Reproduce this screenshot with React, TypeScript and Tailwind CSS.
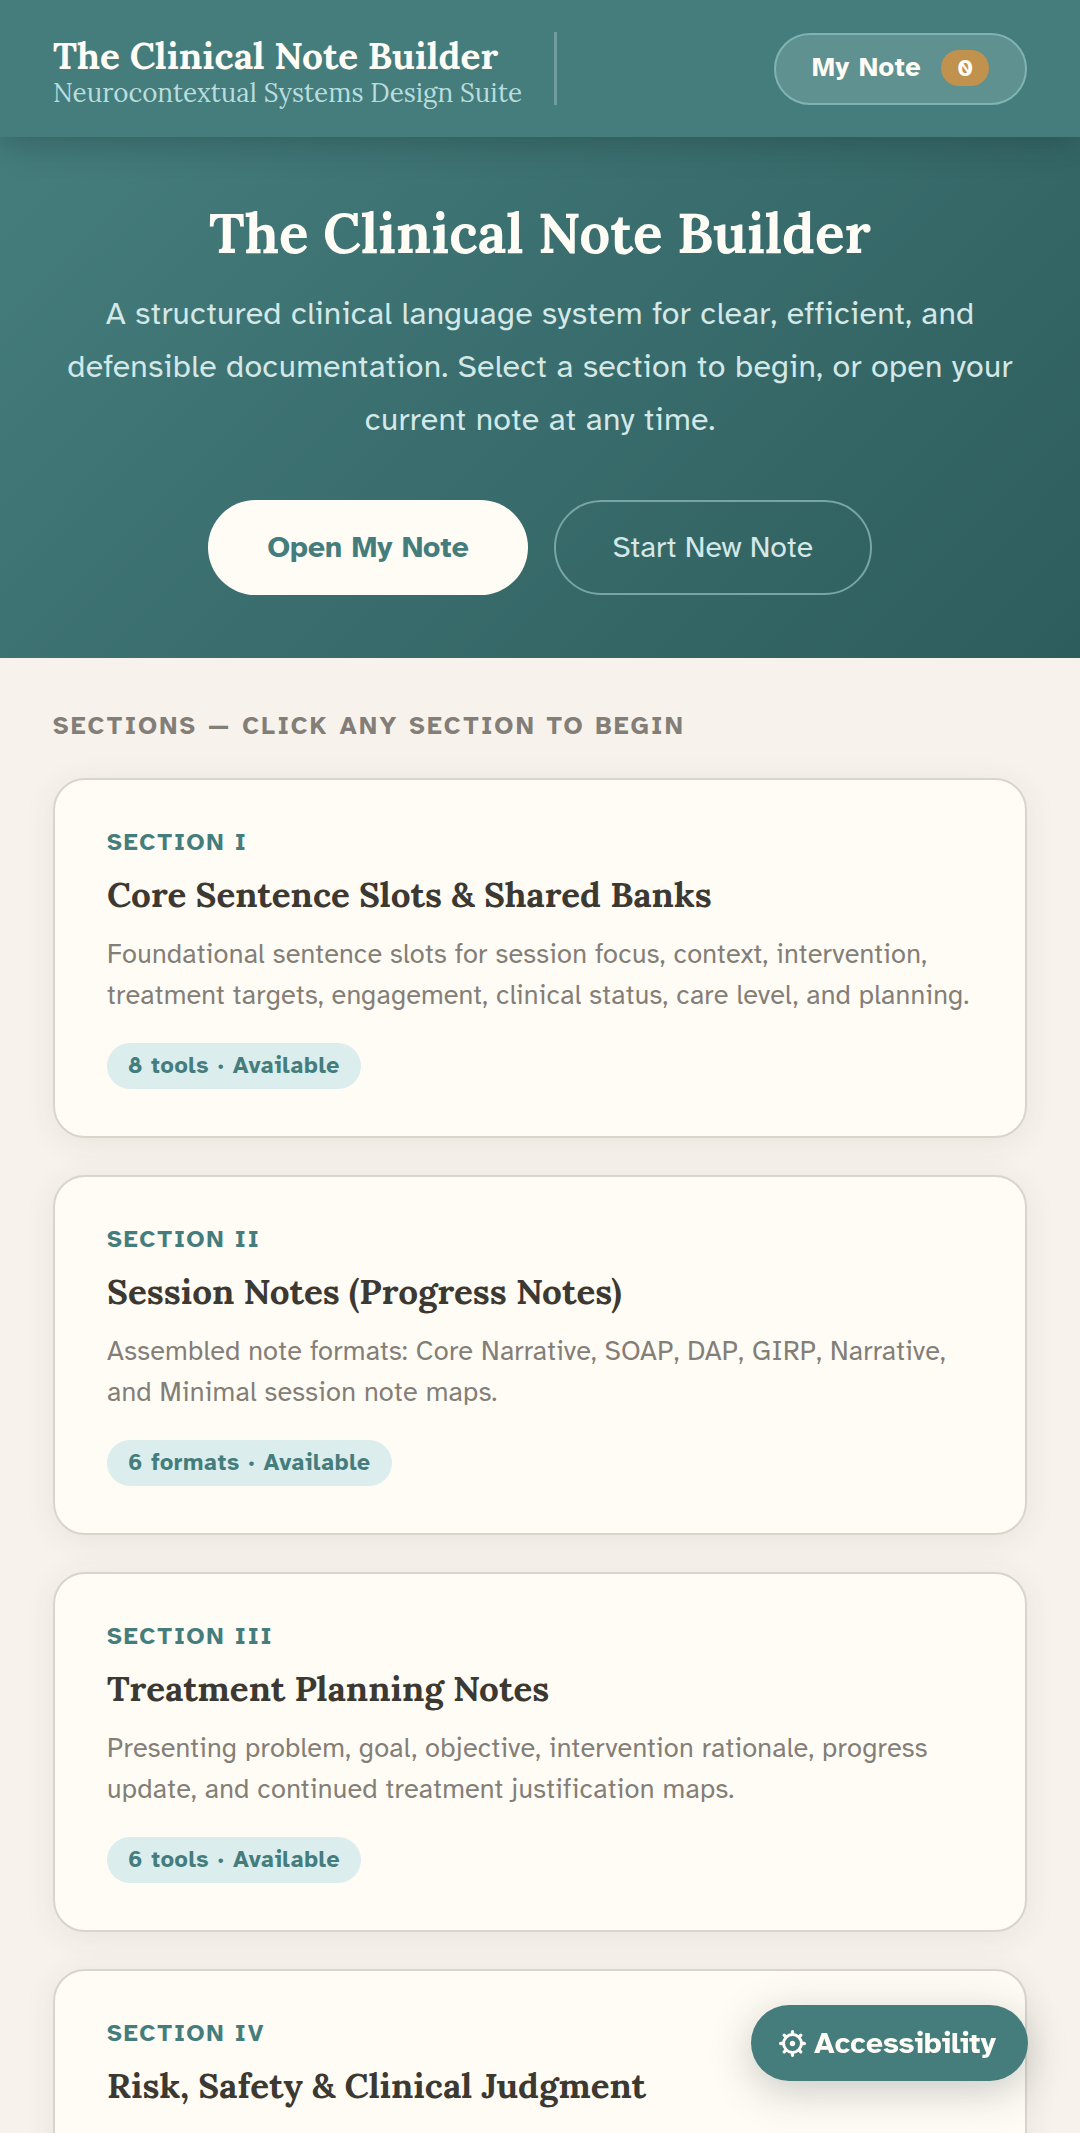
const SERIF = "font-['Lora','Liberation_Serif',serif]";

type Section = {
  id: string;
  label: string;
  title: string;
  description?: string;
  status?: string;
};

const sections: Section[] = [
  {
    id: 'core',
    label: 'SECTION I',
    title: 'Core Sentence Slots & Shared Banks',
    description:
      'Foundational sentence slots for session focus, context, intervention, treatment targets, engagement, clinical status, care level, and planning.',
    status: '8 tools · Available',
  },
  {
    id: 'session',
    label: 'SECTION II',
    title: 'Session Notes (Progress Notes)',
    description:
      'Assembled note formats: Core Narrative, SOAP, DAP, GIRP, Narrative, and Minimal session note maps.',
    status: '6 formats · Available',
  },
  {
    id: 'treatment',
    label: 'SECTION III',
    title: 'Treatment Planning Notes',
    description:
      'Presenting problem, goal, objective, intervention rationale, progress update, and continued treatment justification maps.',
    status: '6 tools · Available',
  },
  {
    id: 'risk',
    label: 'SECTION IV',
    title: 'Risk, Safety & Clinical Judgment',
  },
];

function GearIcon() {
  return (
    <svg viewBox="0 0 26 26" className="size-[27px]" fill="none" stroke="currentColor" aria-hidden="true">
      <circle cx="13" cy="13" r="8.6" strokeWidth="2.8" />
      <circle cx="13" cy="13" r="2.6" fill="currentColor" stroke="none" />
      <g strokeWidth="3.2" strokeLinecap="round">
        <path d="M13 1.6v2.4M13 22v2.4M1.6 13H4M22 13h2.4" />
        <path d="M5 5l1.6 1.6M19.4 19.4L21 21M5 21l1.6-1.6M19.4 6.6L21 5" />
      </g>
    </svg>
  );
}

function Header() {
  return (
    <header className="relative z-10 flex items-center justify-between bg-[#457d7d] px-[53px] py-8 shadow-[0_5px_32px_rgba(20,40,40,0.32)]">
      <div className={`${SERIF} border-r-[3px] border-[#6f9d9d] pr-8`}>
        <div className="pt-1 text-[37px] leading-10 font-bold text-[#fffcf5]">The Clinical Note Builder</div>
        <div className="-mb-1 text-[26px] leading-[33px] text-[#b9dddd]">Neurocontextual Systems Design Suite</div>
      </div>
      <button
        type="button"
        className="flex h-[72px] items-center gap-5 rounded-full border-2 border-[#7fb3b4] bg-[#5f9190] px-9 pb-[2px] text-[27px] font-bold tracking-[0.02em] text-[#fffcf5]"
      >
        My Note
        <span className="flex h-9 w-12 items-center justify-center rounded-full bg-[#c0924e] text-2xl tracking-normal">
          0
        </span>
      </button>
    </header>
  );
}

function Hero() {
  return (
    <section className="bg-linear-135 from-[#457d7d] to-[#2e5d5d] px-[53px] pt-[60px] pb-[63px] text-center">
      <h1 className={`${SERIF} text-[55px] leading-[72px] font-bold text-[#fffcf5]`}>The Clinical Note Builder</h1>
      <p className="mx-auto mt-[18px] max-w-[974px] text-[32px] leading-[53px] tracking-[0.01em] text-[#d3e8e7]">
        A structured clinical language system for clear, efficient, and defensible documentation. Select a section to
        begin, or open your current note at any time.
      </p>
      <div className="mt-[54px] flex justify-center gap-[26px]">
        <button
          type="button"
          className="h-[95px] rounded-full bg-[#fffcf5] px-[59px] text-[30px] font-bold text-[#457d7d]"
        >
          Open My Note
        </button>
        <button
          type="button"
          className="h-[95px] rounded-full border-2 border-[#79a5a6] px-[57px] text-[30px] text-[#d3e8e7]"
        >
          Start New Note
        </button>
      </div>
    </section>
  );
}

function SectionCard({ section }: { section: Section }) {
  return (
    <a
      href={`#${section.id}`}
      className="block min-h-[360px] rounded-[32px] border-2 border-[#d9d5cb] bg-[#fffcf5] pt-[46px] pr-10 pb-[47px] pl-[52px] shadow-[0_5px_32px_rgba(60,56,48,0.08)]"
    >
      <div className="text-2xl leading-8 font-bold tracking-[0.08em] text-[#457d7d]">{section.label}</div>
      <h2 className={`${SERIF} mt-[14px] text-[35px] leading-[46px] font-bold text-[#3c3832]`}>{section.title}</h2>
      {section.description && (
        <p className="mt-4 text-[27px] leading-[41px] tracking-[0.01em] text-[#837e77]">{section.description}</p>
      )}
      {section.status && (
        <div className="mt-[27px] flex">
          <span className="flex h-[46px] items-center rounded-full bg-[#dbeded] px-[21px] text-[23px] font-bold tracking-[0.03em] text-[#457d7d]">
            {section.status}
          </span>
        </div>
      )}
    </a>
  );
}

export default function App() {
  return (
    <div className="h-screen overflow-hidden bg-[#f7f3ec] font-['Atkinson_Hyperlegible','Liberation_Sans',sans-serif]">
      <Header />
      <Hero />
      <main className="px-[53px] pt-[50px]">
        <h2 className="mb-[34px] text-[25px] leading-9 font-bold tracking-[0.1em] text-[#837e77]">
          SECTIONS — CLICK ANY SECTION TO BEGIN
        </h2>
        <div className="flex flex-col gap-[37px]">
          {sections.map((section) => (
            <SectionCard key={section.id} section={section} />
          ))}
        </div>
      </main>
      <button
        type="button"
        className="fixed right-[52px] bottom-[52px] z-20 flex h-[76px] items-center gap-2 rounded-full bg-[#457d7d] pr-8 pl-7 text-[30px] font-bold text-[#fffcf5] shadow-[0_10px_42px_rgba(40,50,50,0.25)]"
      >
        <GearIcon />
        Accessibility
      </button>
    </div>
  );
}
